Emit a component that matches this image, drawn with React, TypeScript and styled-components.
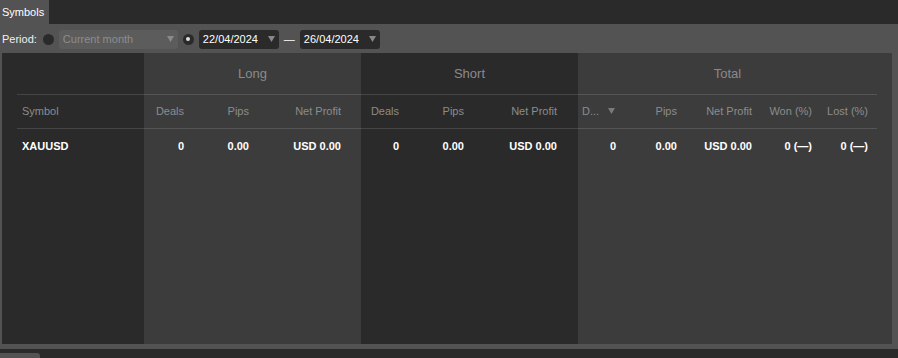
import React from "react";
import styled, { createGlobalStyle } from "styled-components";

const GlobalStyle = createGlobalStyle`
  html, body { margin: 0; padding: 0; background: #2a2a2a; }
  body { font-family: "Liberation Sans", Arial, sans-serif; }
  * { box-sizing: border-box; }
`;

const Page = styled.div`
  width: 898px;
  height: 358px;
  display: flex;
  flex-direction: column;
  background: #2a2a2a;
  font-family: "Liberation Sans", Arial, sans-serif;
  font-size: 11px;
  color: #fff;
  overflow: hidden;
`;

const TabBar = styled.div`
  height: 24px;
  display: flex;
  background: #2a2a2a;
`;

const Tab = styled.div`
  width: 49px;
  height: 24px;
  padding-left: 2px;
  display: flex;
  align-items: center;
  background: #535353;
  color: #fff;
  font-size: 11px;
`;

const Content = styled.div`
  height: 325px;
  display: flex;
  flex-direction: column;
  background: #535353;
  padding: 0 6px 5px 2px;
`;

const Toolbar = styled.div`
  height: 29px;
  display: flex;
  align-items: center;
  gap: 5px;
  padding-top: 1px;
`;

const Label = styled.span`
  color: #f0f0f0;
  font-size: 11px;
  margin-right: 1px;
`;

const Radio = styled.span<{ $checked?: boolean }>`
  width: 11px;
  height: 11px;
  border-radius: 50%;
  background: #2a2a2a;
  display: flex;
  align-items: center;
  justify-content: center;
  &::after {
    content: "";
    width: 4px;
    height: 4px;
    border-radius: 50%;
    background: ${(p) => (p.$checked ? "#e0e0e0" : "transparent")};
  }
`;

const Select = styled.div<{ $w: number; $disabled?: boolean }>`
  width: ${(p) => p.$w}px;
  height: 19px;
  border-radius: 3px;
  background: ${(p) => (p.$disabled ? "#5c5c5c" : "#2a2a2a")};
  color: ${(p) => (p.$disabled ? "#8c8c8c" : "#ffffff")};
  display: flex;
  align-items: center;
  justify-content: space-between;
  padding: 0 4px 0 4px;
  font-size: 11px;
`;

const Dash = styled.span`
  color: #fff;
  font-size: 11px;
`;

const Panel = styled.div`
  flex: 1;
  display: flex;
  background: #3c3c3c;
`;

const Group = styled.div<{ $w: number; $dark?: boolean; $padL?: number; $padR?: number }>`
  width: ${(p) => p.$w}px;
  flex: ${(p) => (p.$w ? "none" : "1")};
  background: ${(p) => (p.$dark ? "#2a2a2a" : "#3c3c3c")};
  padding-left: ${(p) => p.$padL || 0}px;
  padding-right: ${(p) => p.$padR || 0}px;
  display: flex;
  flex-direction: column;
`;

const GroupHeader = styled.div`
  height: 42px;
  display: flex;
  align-items: center;
  justify-content: center;
  border-bottom: 1px solid rgba(255, 255, 255, 0.13);
  color: #8a8a8a;
  font-size: 13px;
`;

const HeaderRow = styled.div`
  height: 34px;
  display: flex;
  align-items: center;
  padding-bottom: 2px;
  border-bottom: 1px solid rgba(255, 255, 255, 0.13);
  color: #8c8c8c;
  font-size: 11px;
`;

const DataRow = styled.div`
  height: 34px;
  display: flex;
  align-items: center;
  color: #ffffff;
  font-size: 11px;
  font-weight: bold;
`;

const Cell = styled.div<{ $w?: number; $left?: boolean }>`
  width: ${(p) => (p.$w ? `${p.$w}px` : "auto")};
  flex: ${(p) => (p.$w ? "none" : "1")};
  text-align: ${(p) => (p.$left ? "left" : "right")};
  padding-left: ${(p) => (p.$left ? 5 : 0)}px;
  white-space: nowrap;
`;

const SortCell = styled.div<{ $w: number }>`
  width: ${(p) => p.$w}px;
  display: flex;
  align-items: center;
  justify-content: space-between;
  padding-left: 4px;
  padding-right: 1px;
  white-space: nowrap;
`;

const BottomBar = styled.div`
  height: 9px;
  display: flex;
  align-items: flex-end;
  background: #2a2a2a;
`;

const BottomTab = styled.div`
  width: 40px;
  height: 5px;
  background: #535353;
  border-top-right-radius: 3px;
`;

const Arrow = ({ color = "#888" }: { color?: string }) => (
  <svg width="7" height="6" viewBox="0 0 7 6">
    <polygon points="0,0 7,0 3.5,6" fill={color} />
  </svg>
);

type Col = { label: string; w: number; value: string };

const longCols: Col[] = [
  { label: "Deals", w: 40, value: "0" },
  { label: "Pips", w: 65, value: "0.00" },
  { label: "Net Profit", w: 92, value: "USD 0.00" },
];
const shortCols: Col[] = [
  { label: "Deals", w: 38, value: "0" },
  { label: "Pips", w: 65, value: "0.00" },
  { label: "Net Profit", w: 93, value: "USD 0.00" },
];
const totalCols: Col[] = [
  { label: "Pips", w: 61, value: "0.00" },
  { label: "Net Profit", w: 75, value: "USD 0.00" },
  { label: "Won (%)", w: 60, value: "0 (—)" },
  { label: "Lost (%)", w: 56, value: "0 (—)" },
];

const DataGroup = ({ title, cols, dark }: { title: string; cols: Col[]; dark?: boolean }) => (
  <Group $w={217} $dark={dark}>
    <GroupHeader>{title}</GroupHeader>
    <HeaderRow>
      {cols.map((c) => (
        <Cell key={c.label} $w={c.w}>{c.label}</Cell>
      ))}
    </HeaderRow>
    <DataRow>
      {cols.map((c) => (
        <Cell key={c.label} $w={c.w}>{c.value}</Cell>
      ))}
    </DataRow>
  </Group>
);

export default function App() {
  return (
    <Page>
      <GlobalStyle />
      <TabBar>
        <Tab>Symbols</Tab>
      </TabBar>
      <Content>
        <Toolbar>
          <Label>Period:</Label>
          <Radio />
          <Select $w={119} $disabled>
            <span>Current month</span>
            <Arrow color="#8a8a8a" />
          </Select>
          <Radio $checked />
          <Select $w={80}>
            <span>22/04/2024</span>
            <Arrow />
          </Select>
          <Dash>—</Dash>
          <Select $w={80}>
            <span>26/04/2024</span>
            <Arrow />
          </Select>
        </Toolbar>
        <Panel>
          <Group $w={142} $dark $padL={15}>
            <GroupHeader />
            <HeaderRow>
              <Cell $left>Symbol</Cell>
            </HeaderRow>
            <DataRow>
              <Cell $left>XAUUSD</Cell>
            </DataRow>
          </Group>
          <DataGroup title="Long" cols={longCols} />
          <DataGroup title="Short" cols={shortCols} dark />
          <Group $w={0} $padR={15}>
            <GroupHeader>Total</GroupHeader>
            <HeaderRow>
              <SortCell $w={38}>
                <span>D...</span>
                <Arrow color="#7a7a7a" />
              </SortCell>
              {totalCols.map((c) => (
                <Cell key={c.label} $w={c.w}>{c.label}</Cell>
              ))}
            </HeaderRow>
            <DataRow>
              <Cell $w={38}>0</Cell>
              {totalCols.map((c) => (
                <Cell key={c.label} $w={c.w}>{c.value}</Cell>
              ))}
            </DataRow>
          </Group>
        </Panel>
      </Content>
      <BottomBar>
        <BottomTab />
      </BottomBar>
    </Page>
  );
}
